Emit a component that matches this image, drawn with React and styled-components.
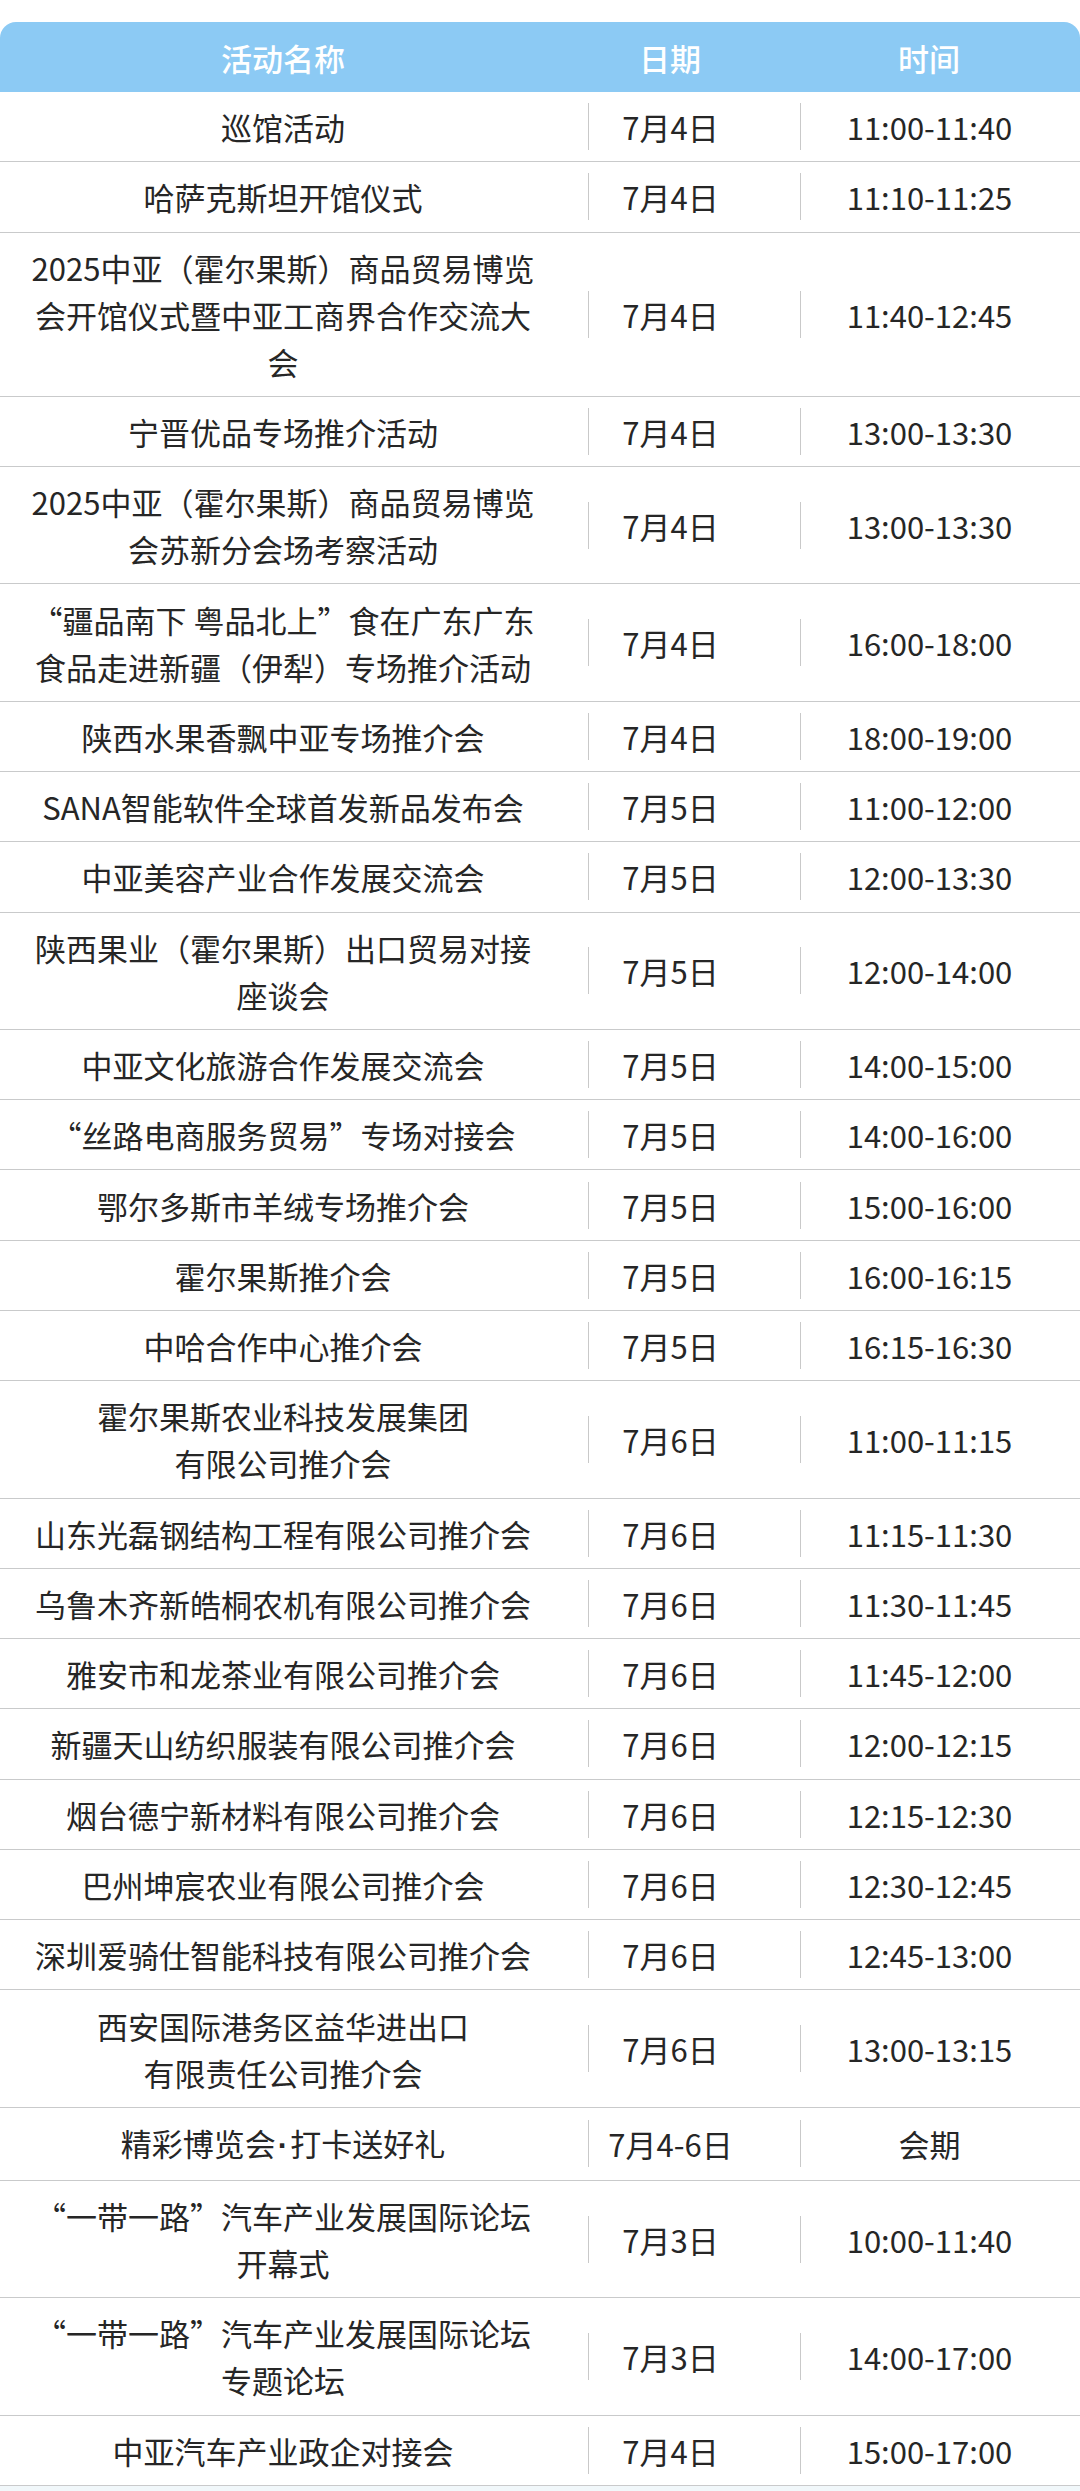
import React from "react";
import styled, { createGlobalStyle } from "styled-components";

const Global = createGlobalStyle`
  html, body { margin: 0; padding: 0; background: #f1f7fa; }
  body { font-family: "Noto Sans CJK SC", "Noto Sans", sans-serif; }
`;

const Page = styled.div`
  background: #ffffff;
  padding-top: 22px;
`;

const Table = styled.div`
  width: 1080px;
  display: grid;
  grid-template-columns: 588px 212px 280px;
`;

const HeadCell = styled.div`
  height: 70px;
  background: #8ccaf4;
  color: #ffffff;
  font-size: 31px;
  font-weight: 500;
  display: flex;
  align-items: center;
  justify-content: center;
  padding-right: ${(p) => p.$pr}px;
  border-top-left-radius: ${(p) => (p.$first ? "16px" : "0")};
  border-top-right-radius: ${(p) => (p.$last ? "16px" : "0")};
`;

const Cell = styled.div`
  display: flex;
  align-items: center;
  padding: 11.15px ${(p) => p.$pr}px 11.15px 0;
  border-bottom: 1px solid #c9cacb;
  background: #ffffff;
`;

const Name = styled.div`
  width: 100%;
  text-align: center;
  font-size: 31px;
  line-height: 47px;
  color: #262626;
  white-space: nowrap;
`;

const Dot = styled.span`
  font-family: "Liberation Sans", sans-serif;
  font-weight: 700;
  margin: 0 2px;
`;

const Value = styled.div`
  width: 100%;
  text-align: center;
  font-size: 31px;
  line-height: 47px;
  color: #262626;
  border-left: 1px solid #c9c9c9;
  white-space: nowrap;
`;

const rows = [
  [["巡馆活动"], "7月4日", "11:00-11:40"],
  [["哈萨克斯坦开馆仪式"], "7月4日", "11:10-11:25"],
  [["2025中亚（霍尔果斯）商品贸易博览", "会开馆仪式暨中亚工商界合作交流大", "会"], "7月4日", "11:40-12:45"],
  [["宁晋优品专场推介活动"], "7月4日", "13:00-13:30"],
  [["2025中亚（霍尔果斯）商品贸易博览", "会苏新分会场考察活动"], "7月4日", "13:00-13:30"],
  [["“疆品南下 粤品北上”食在广东广东", "食品走进新疆（伊犁）专场推介活动"], "7月4日", "16:00-18:00"],
  [["陕西水果香飘中亚专场推介会"], "7月4日", "18:00-19:00"],
  [["SANA智能软件全球首发新品发布会"], "7月5日", "11:00-12:00"],
  [["中亚美容产业合作发展交流会"], "7月5日", "12:00-13:30"],
  [["陕西果业（霍尔果斯）出口贸易对接", "座谈会"], "7月5日", "12:00-14:00"],
  [["中亚文化旅游合作发展交流会"], "7月5日", "14:00-15:00"],
  [["“丝路电商服务贸易”专场对接会"], "7月5日", "14:00-16:00"],
  [["鄂尔多斯市羊绒专场推介会"], "7月5日", "15:00-16:00"],
  [["霍尔果斯推介会"], "7月5日", "16:00-16:15"],
  [["中哈合作中心推介会"], "7月5日", "16:15-16:30"],
  [["霍尔果斯农业科技发展集团", "有限公司推介会"], "7月6日", "11:00-11:15"],
  [["山东光磊钢结构工程有限公司推介会"], "7月6日", "11:15-11:30"],
  [["乌鲁木齐新皓桐农机有限公司推介会"], "7月6日", "11:30-11:45"],
  [["雅安市和龙茶业有限公司推介会"], "7月6日", "11:45-12:00"],
  [["新疆天山纺织服装有限公司推介会"], "7月6日", "12:00-12:15"],
  [["烟台德宁新材料有限公司推介会"], "7月6日", "12:15-12:30"],
  [["巴州坤宸农业有限公司推介会"], "7月6日", "12:30-12:45"],
  [["深圳爱骑仕智能科技有限公司推介会"], "7月6日", "12:45-13:00"],
  [["西安国际港务区益华进出口", "有限责任公司推介会"], "7月6日", "13:00-13:15"],
  [["精彩博览会·打卡送好礼"], "7月4-6日", "会期"],
  [["“一带一路”汽车产业发展国际论坛", "开幕式"], "7月3日", "10:00-11:40"],
  [["“一带一路”汽车产业发展国际论坛", "专题论坛"], "7月3日", "14:00-17:00"],
  [["中亚汽车产业政企对接会"], "7月4日", "15:00-17:00"],
];

function renderLine(line) {
  const parts = line.split("·");
  return parts.map((part, k) => (
    <React.Fragment key={k}>
      {k > 0 && <Dot>·</Dot>}
      {part}
    </React.Fragment>
  ));
}

export default function App() {
  return (
    <Page>
      <Global />
      <Table>
        <HeadCell $first $pr={22}>活动名称</HeadCell>
        <HeadCell $pr={48}>日期</HeadCell>
        <HeadCell $last $pr={22}>时间</HeadCell>
        {rows.map(([name, date, time], i) => (
          <React.Fragment key={i}>
            <Cell $pr={22}>
              <Name>
                {name.map((line, j) => (
                  <React.Fragment key={j}>
                    {j > 0 && <br />}
                    {renderLine(line)}
                  </React.Fragment>
                ))}
              </Name>
            </Cell>
            <Cell $pr={48}>
              <Value>{date}</Value>
            </Cell>
            <Cell $pr={22}>
              <Value>{time}</Value>
            </Cell>
          </React.Fragment>
        ))}
      </Table>
    </Page>
  );
}
